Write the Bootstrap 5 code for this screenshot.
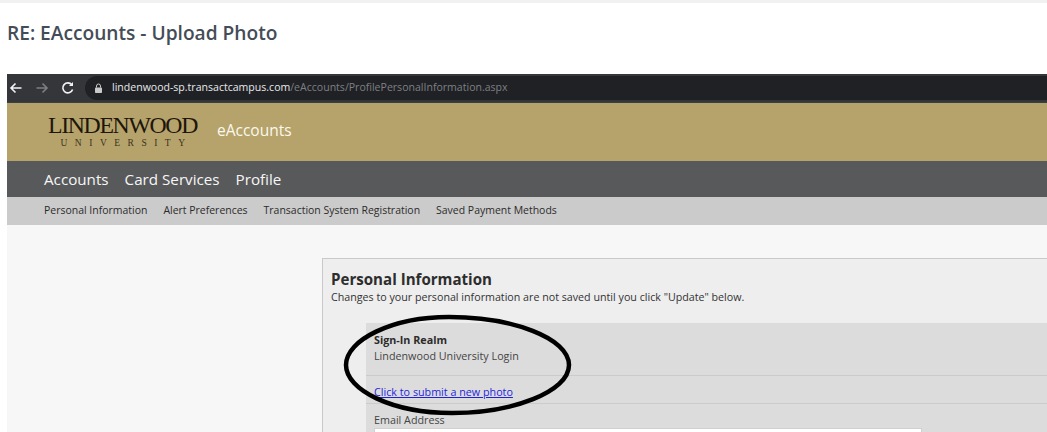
<!DOCTYPE html>
<html lang="en">
<head>
<meta charset="utf-8">
<title>RE: EAccounts - Upload Photo</title>
<link href="https://cdn.jsdelivr.net/npm/bootstrap@5.3.0/dist/css/bootstrap.min.css" rel="stylesheet">
<style>
html, body { height: 432px; overflow: hidden; background: #fff; }
body { font-family: "Open Sans", "Noto Sans", sans-serif; color: #333; }
.topline { height: 3px; background: #f1f1f1; }
.mail-title { height: 71px; padding: 17px 0 0 7px; font-size: 19.15px; line-height: 26px; font-weight: 600; color: #444c57; margin: 0; }
.shot { margin-left: 7px; position: relative; height: 358px; overflow: hidden; background: #f7f7f7; }
.chrome { height: 29px; background: #35363a; border-bottom: 1px solid #3a3f48; }
.chrome-btn { width: 26px; flex: none; }
.omni { height: 24px; flex: 1; background: #202124; border-radius: 12px 0 0 12px; margin-left: 4px; padding-left: 9px; font-size: 10.55px; white-space: nowrap; color: #e8eaed; }
.omni svg { margin-right: 9px; }
.omni span { color: #7d8084; }
.goldbar { height: 58px; background: #b5a36b; padding: 0 0 2px 41px; }
.logo-wrap { width: 150px; text-align: center; font-family: "Liberation Serif", serif; color: #1d160b; }
.logo-main { font-size: 23.8px; line-height: 23px; letter-spacing: -1.35px; white-space: nowrap; margin-left: -1px; }
.logo-sub { font-size: 9.5px; line-height: 12px; letter-spacing: 7.5px; margin-right: -7px; color: #3a3220; }
.app-name { margin-left: 19px; font-size: 15.5px; color: #fbf8ec; }
.mainnav { height: 36px; background: #58595b; padding: 1px 0 0 37px; gap: 16px; font-size: 15.2px; color: #f6f6f6; }
.subnav { height: 28px; background: #cbcbcb; padding: 0 0 1px 37px; gap: 16px; font-size: 10.48px; color: #2b2b2b; }
.content { padding: 33px 0 0 315px; }
.panel-box { height: 200px; width: 760px; background: #eee; border: 1px solid #c9c9c9; padding: 10px 8px 0 8px; }
.panel-box h2 { font-size: 15.1px; line-height: 20px; font-weight: 700; color: #2d2d2d; margin: 0; }
.panel-note { font-size: 10.7px; line-height: 16px; color: #333; white-space: nowrap; }
.fields { margin: 18px 0 0 35px; background: #dcdcdc; height: 140px; padding: 9px 8px 0 8px; font-size: 10.75px; color: #444; }
.fields b { display: block; line-height: 16px; font-weight: 700; color: #2b2b2b; }
.realm { line-height: 16px; height: 27px; }
.sep { border-top: 1px solid #cbcbcb; margin: 0 -8px; }
.photo-row { height: 27px; padding-top: 8px; line-height: 16px; }
.photo-row a { color: #1f1fe0; }
.email-row { line-height: 16px; padding-top: 8px; }
.email-input { display: block; width: 548px; height: 20px; background: #fff; border: 1px solid #d0d0d0; }
.oval { position: absolute; left: 330px; top: 236px; pointer-events: none; }
</style>
</head>
<body>
<div class="topline"></div>
<h1 class="mail-title">RE: EAccounts - Upload Photo</h1>
<div class="shot">
  <div class="chrome d-flex align-items-center">
    <div class="chrome-btn d-flex justify-content-center" style="margin-left:-4px">
      <svg width="14" height="14" viewBox="0 0 14 14" fill="none" stroke="#f1f3f4" stroke-width="1.6"><path d="M12.5 7H2M6.5 2.5 2 7l4.5 4.5"/></svg>
    </div>
    <div class="chrome-btn d-flex justify-content-center">
      <svg width="14" height="14" viewBox="0 0 14 14" fill="none" stroke="#7c7e82" stroke-width="1.6"><path d="M1.5 7H12M7.5 2.5 12 7l-4.500 4.500"/></svg>
    </div>
    <div class="chrome-btn d-flex justify-content-center">
      <svg width="14" height="14" viewBox="0 0 14 14" fill="none" stroke="#f1f3f4" stroke-width="1.6"><path d="M11.600 8.500A5 5 0 1 1 10.800 3.800"/><path d="M12 1v4H8z" fill="#f1f3f4" stroke="none"/></svg>
    </div>
    <div class="omni d-flex align-items-center">
      <svg width="9" height="11" viewBox="0 0 9 11"><path d="M2.500 4.500V3a2 2 0 0 1 4 0v1.500" fill="none" stroke="#c8c9cb" stroke-width="1"/><rect x="1" y="4.500" width="7" height="5.500" rx=".8" fill="#c8c9cb"/></svg>
      <div>lindenwood-sp.transactcampus.com<span>/eAccounts/ProfilePersonalInformation.aspx</span></div>
    </div>
  </div>
  <div class="goldbar d-flex align-items-center">
    <div class="logo-wrap">
      <div class="logo-main">LINDENWOOD</div>
      <div class="logo-sub">UNIVERSITY</div>
    </div>
    <div class="app-name">eAccounts</div>
  </div>
  <div class="mainnav d-flex align-items-center">
    <span>Accounts</span><span>Card Services</span><span>Profile</span>
  </div>
  <div class="subnav d-flex align-items-center">
    <span>Personal Information</span><span>Alert Preferences</span><span>Transaction System Registration</span><span>Saved Payment Methods</span>
  </div>
  <div class="content">
    <div class="panel-box">
      <h2>Personal Information</h2>
      <div class="panel-note">Changes to your personal information are not saved until you click "Update" below.</div>
      <div class="fields">
        <b>Sign-In Realm</b>
        <div class="realm">Lindenwood University Login</div>
        <div class="sep"></div>
        <div class="photo-row"><a href="#">Click to submit a new photo</a></div>
        <div class="sep"></div>
        <div class="email-row">Email Address<span class="email-input"></span></div>
      </div>
    </div>
  </div>
  <svg class="oval" width="240" height="112" viewBox="0 0 240 112" fill="none">
    <path d="M9 55C9 30 55 7 112 7C175 7 232 28 232 55C232 82 175 103 115 103C55 103 9 80 9 55Z" stroke="#000" stroke-width="4.500"/>
  </svg>
</div>
</body>
</html>
